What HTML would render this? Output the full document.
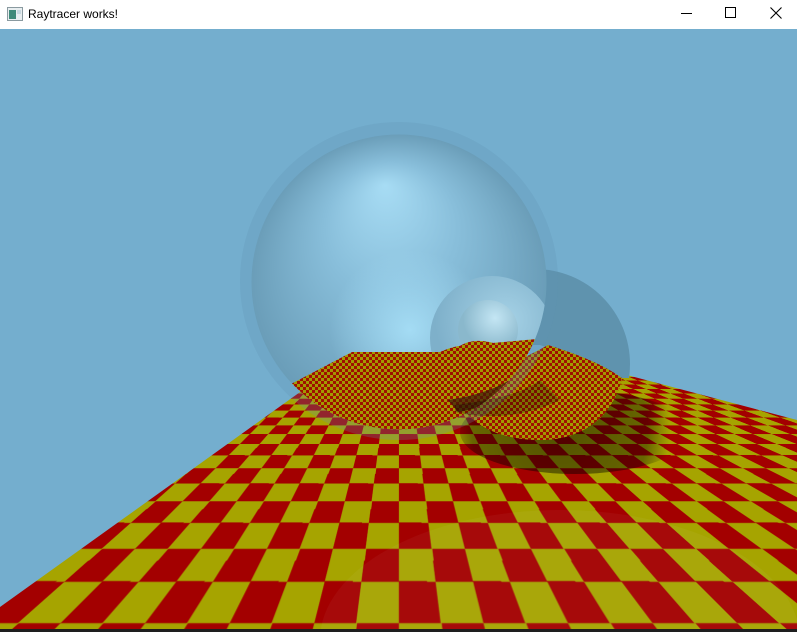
<!DOCTYPE html>
<html><head><meta charset="utf-8">
<style>
html,body{margin:0;padding:0;width:797px;height:632px;overflow:hidden;background:#74aece;}
#scene{position:absolute;left:0;top:0;width:797px;height:632px;overflow:hidden;background:#74aece;}
#floorwrap{position:absolute;left:0;top:0;width:797px;height:632px;perspective:300px;perspective-origin:399px 285px;
clip-path:polygon(356px 352px,574px 361px,797px 420px,797px 632px,0px 632px,0px 607px);}
#floor{position:absolute;left:-3000px;top:632px;width:7000px;height:1500px;transform-origin:50% 0;transform:rotateX(-90deg);
background:conic-gradient(#a6a400 0 25%,#a30000 0 50%,#a6a400 0 75%,#a30000 0);background-size:86.8px 86.8px;background-position:13.8px 7.8px;}
#title{position:absolute;left:0;top:0;width:797px;height:29px;background:#fff;font-family:"Liberation Sans",sans-serif;font-size:12px;color:#000;}
#title .t{position:absolute;left:28px;top:7px;}
#svg{position:absolute;left:0;top:0;}
#bot{position:absolute;left:0;top:629px;width:797px;height:3px;background:#1e1e1e;}
</style></head><body>
<div id="scene">
<div id="floorwrap"><div id="floor"></div></div>
<svg id="svg" width="797" height="632" viewBox="0 0 797 632">
<defs>
<pattern id="fc" width="6" height="6" patternUnits="userSpaceOnUse">
<rect width="6" height="6" fill="#a39a00"/><rect width="3" height="3" fill="#a01000"/><rect x="3" y="3" width="3" height="3" fill="#a01000"/>
</pattern>
<radialGradient id="big" cx="399" cy="282" r="148" gradientUnits="userSpaceOnUse" fx="385" fy="185">
<stop offset="0" stop-color="#a7dcf4"/><stop offset="0.45" stop-color="#88beda"/><stop offset="1" stop-color="#6a9db8"/>
</radialGradient>
<radialGradient id="low" cx="410" cy="330" r="80" gradientUnits="userSpaceOnUse">
<stop offset="0" stop-color="#a8e0f8" stop-opacity="0.9"/><stop offset="1" stop-color="#a8e0f8" stop-opacity="0"/>
</radialGradient>
<radialGradient id="small" cx="505" cy="320" r="70" gradientUnits="userSpaceOnUse">
<stop offset="0" stop-color="#a6d2e6"/><stop offset="1" stop-color="#7eb0ca"/>
</radialGradient>
<radialGradient id="refl" cx="495" cy="318" r="32" gradientUnits="userSpaceOnUse">
<stop offset="0" stop-color="#c4e6f4"/><stop offset="1" stop-color="#8ab8cc"/>
</radialGradient>
<radialGradient id="sh" cx="560" cy="430" r="110" gradientUnits="userSpaceOnUse">
<stop offset="0" stop-color="#000" stop-opacity="0.5"/><stop offset="0.8" stop-color="#000" stop-opacity="0.38"/><stop offset="1" stop-color="#000" stop-opacity="0"/>
</radialGradient>
<clipPath id="inner"><circle cx="399" cy="282" r="147.5"/></clipPath>
<clipPath id="smallclip"><path d="M420,250 L650,250 L650,378 L620,378 C590,365 560,352 540,345 L420,345 Z"/></clipPath>
</defs>
<ellipse cx="575" cy="432" rx="115" ry="42" fill="url(#sh)"/>
<ellipse cx="560" cy="640" rx="240" ry="130" fill="#ffffff" opacity="0.04"/>
<circle cx="535" cy="364" r="95" fill="#5f93ae" clip-path="url(#smallclip)"/>
<path d="M548,345 C570,352 600,362 622,378 C615,410 590,438 545,440 C505,441 475,428 460,405 L470,380 C500,370 530,355 548,345 Z" fill="url(#fc)"/>
<circle cx="399" cy="281" r="159" fill="#5f95b3" opacity="0.25"/>
<circle cx="399" cy="282" r="147.5" fill="url(#big)"/>
<circle cx="410" cy="330" r="80" fill="url(#low)"/>
<g clip-path="url(#inner)">
<circle cx="492" cy="338" r="62" fill="url(#small)"/>
<circle cx="488" cy="330" r="30" fill="url(#refl)"/>
<path d="M270,395 L352,352 L440,352 C445,350 455,345 470,345 L548,338 L560,400 L560,460 L250,460 Z" fill="url(#fc)"/>
<path d="M455,350 C465,340 480,338 500,345 C510,348 520,352 530,352 L540,344 L560,350 L560,380 C520,395 480,400 458,405 Z" fill="url(#fc)"/>
<path d="M448,400 C480,395 520,385 545,345 L552,348 C535,385 500,405 458,412 Z" fill="#3a1a08" opacity="0.7"/>
</g>
<path d="M455,405 C490,400 520,395 540,380 L560,400 C520,420 480,418 455,412 Z" fill="#000" opacity="0.25"/>
</svg>
<div id="bot"></div>
<div id="title">
<svg style="position:absolute;left:7px;top:7px" width="16" height="14" viewBox="0 0 16 14">
<rect x="0.5" y="0.5" width="15" height="13" fill="#e8eef0" stroke="#8a9aa0"/>
<rect x="2" y="3" width="7" height="9" fill="#3f8a7a"/><rect x="10" y="3" width="4" height="4" fill="#c8d8e0"/>
</svg>
<span class="t">Raytracer works!</span>
<svg style="position:absolute;left:670px;top:0" width="127" height="29" viewBox="670 0 127 29">
<line x1="681" y1="13.5" x2="692" y2="13.5" stroke="#000" stroke-width="1"/>
<rect x="725.5" y="7.5" width="10" height="10" fill="none" stroke="#000" stroke-width="1"/>
<path d="M770.5,7.5 L781.5,18.5 M781.5,7.5 L770.5,18.5" stroke="#000" stroke-width="1.1"/>
</svg>
</div>
</div>
</body></html>
